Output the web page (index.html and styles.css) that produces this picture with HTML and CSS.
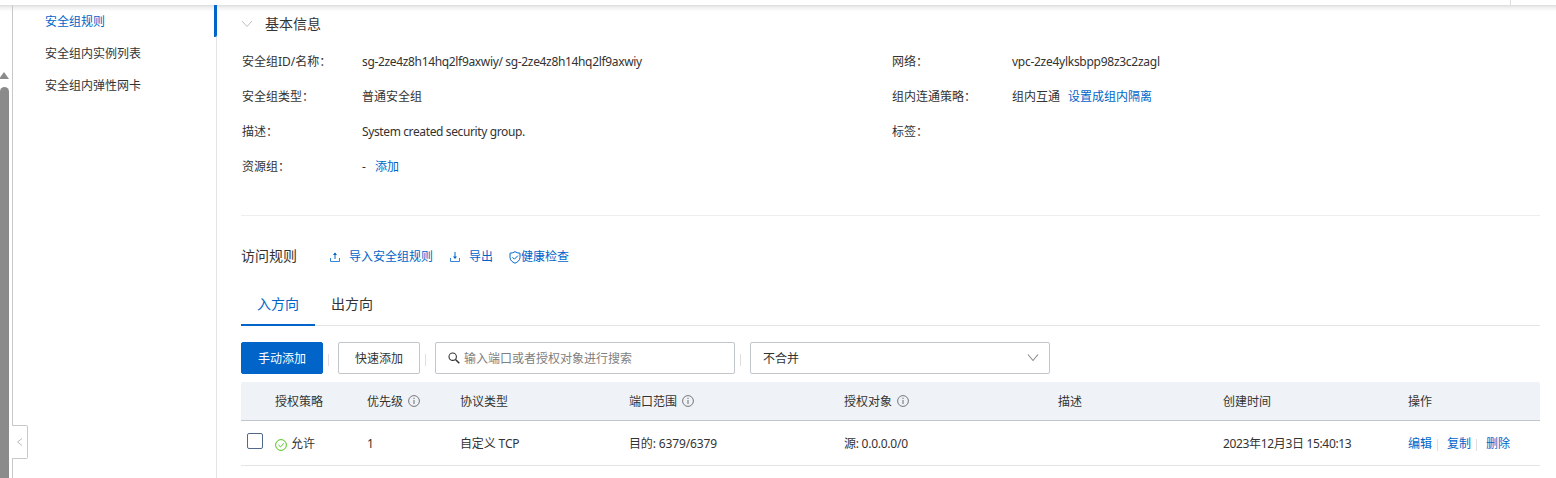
FILE: index.html
```html
<!DOCTYPE html>
<html lang="zh-CN">
<head>
<meta charset="utf-8">
<title>安全组规则</title>
<link rel="stylesheet" href="styles.css">
</head>
<body>
<svg class="defs" width="0" height="0">
  <symbol id="info" viewBox="0 0 12 12"><circle cx="6" cy="6" r="5.4" fill="none" stroke="#777" stroke-width="1"/><path d="M6 5v4M6 2.8v1.2" stroke="#777" stroke-width="1.1"/></symbol>
</svg>
<header class="topbar"><span class="topbar-split"></span></header>
<div class="shell">
  <div class="rail"><span class="rail-arrow"></span><span class="rail-thumb"></span></div>
  <nav class="side">
    <a class="side-item active">安全组规则</a>
    <a class="side-item">安全组内实例列表</a>
    <a class="side-item">安全组内弹性网卡</a>
    <span class="collapse"><svg width="7" height="10" viewBox="0 0 7 10"><path d="M6 1.5L1.5 5L6 8.5" fill="none" stroke="#bbb"/></svg></span>
  </nav>
  <main class="main">
    <h2 class="section-title"><svg width="12" height="8" viewBox="0 0 12 8"><path d="M1 1l5 5.5L11 1" fill="none" stroke="#c0c0c0"/></svg>基本信息</h2>
    <div class="info">
      <dl class="info-col">
        <dt>安全组ID/名称：</dt><dd><span class="ids">sg-2ze4z8h14hq2lf9axwiy/ sg-2ze4z8h14hq2lf9axwiy</span></dd>
        <dt>安全组类型：</dt><dd>普通安全组</dd>
        <dt>描述：</dt><dd><span class="desc">System created security group.</span></dd>
        <dt>资源组：</dt><dd>-<a class="link add">添加</a></dd>
      </dl>
      <dl class="info-col">
        <dt>网络：</dt><dd><span class="vpc">vpc-2ze4ylksbpp98z3c2zagl</span></dd>
        <dt>组内连通策略：</dt><dd>组内互通<a class="link">设置成组内隔离</a></dd>
        <dt>标签：</dt><dd></dd>
      </dl>
    </div>
    <div class="rules-head">
      <h2>访问规则</h2>
      <a class="import"><svg width="12" height="12" viewBox="0 0 12 12" fill="none" stroke="#3485dc"><path d="M1.5 7v3.5h9V7"/><path d="M6 8V2" stroke="#0064c8"/><path d="M4 4L6 1.5L8 4z" fill="#0064c8" stroke="none"/></svg>导入安全组规则</a>
      <a class="export"><svg width="12" height="12" viewBox="0 0 12 12" fill="none" stroke="#3485dc"><path d="M1.5 7v3.5h9V7"/><path d="M6 1v6" stroke="#0064c8"/><path d="M4 5.5L6 8L8 5.5z" fill="#0064c8" stroke="none"/></svg>导出</a>
      <a class="check"><svg width="12" height="13" viewBox="0 0 12 13" fill="none" stroke="#0064c8"><path d="M6 .7C4.6 1.7 2.7 2.2 1 2.2V6.500C1 9.300 3.500 11.200 6 12.200C8.500 11.200 11 9.300 11 6.500V2.200C9.300 2.200 7.400 1.700 6 .7Z"/><path d="M3.400 6.200l2 2 3.400-3.500"/></svg>健康检查</a>
    </div>
    <div class="tabs"><a class="tab on">入方向</a><a class="tab">出方向</a></div>
    <div class="tools">
      <button class="btn primary">手动添加</button><i class="sep"></i>
      <button class="btn">快速添加</button><i class="sep"></i>
      <label class="field search"><svg width="12" height="12" viewBox="0 0 12 12" fill="none" stroke="#333"><circle cx="4.700" cy="4.700" r="3.700" stroke-width="1.100"/><path d="M7.500 7.500L11.300 11.300" stroke-width="1.500"/></svg>输入端口或者授权对象进行搜索</label><i class="sep"></i>
      <div class="field select">不合并<svg width="12" height="8" viewBox="0 0 12 8"><path d="M1 .5l5 6L11 .5" fill="none" stroke="#888" stroke-width="1.100"/></svg></div>
    </div>
    <div class="table">
      <div class="row head">
        <span></span><span>授权策略</span><span>优先级<svg class="i"><use href="#info"/></svg></span><span>协议类型</span><span>端口范围<svg class="i"><use href="#info"/></svg></span><span>授权对象<svg class="i"><use href="#info"/></svg></span><span>描述</span><span>创建时间</span><span>操作</span>
      </div>
      <div class="row body">
        <span><i class="box"></i></span>
        <span><svg class="ok" width="12" height="12" viewBox="0 0 12 12" fill="none" stroke="#52c41a"><circle cx="6" cy="6" r="5.400"/><path d="M3.400 5.800l2.100 2.100 3.300-3.600"/></svg>允许</span>
        <span>1</span><span class="cell">自定义 TCP</span><span class="cell">目的: 6379/6379</span><span class="cell addr">源: 0.0.0.0/0</span><span></span><span class="date">2023年12月3日 15:40:13</span>
        <span class="ops"><a>编辑</a><i></i><a>复制</a><i></i><a>删除</a></span>
      </div>
    </div>
  </main>
</div>
</body>
</html>
```
FILE: styles.css
```css
* { box-sizing: border-box; }
body { margin: 0; height: 478px; overflow: hidden; background: #fff; color: #333; font: 12px/18px "Noto Sans", "Noto Sans CJK SC", sans-serif; }
h2, dl, dd { margin: 0; font-weight: 400; }
svg { flex: none; display: block; }
.defs { position: absolute; }
a { color: #0064c8; }
.topbar { height: 5px; display: flex; justify-content: flex-end; padding-right: 45px; }
.topbar-split { width: 1px; background: #ddd; }
.shell { display: flex; height: 473px; background: linear-gradient(#dcdcdc, #ededed 2px, #fafafa 5px, #fff 7px); }
.rail { width: 12px; display: flex; flex-direction: column; padding-top: 67px; }
.rail-arrow { width: 0; border: 5px solid transparent; border-top: 0; border-bottom: 7px solid #8b8b8b; margin-left: -1px; }
.rail-thumb { flex: 1; width: 9px; margin-top: 8px; margin-bottom: -5px; background: #8b8b8b; border-radius: 5px 5px 0 0; }
.side { position: relative; width: 205px; flex: none; border-left: 1px solid #c8c8c8; border-right: 1px solid #e3e4e6; }
.rail { flex: none; }
.side-item { display: block; height: 32px; line-height: 34px; padding-left: 32px; color: #333; }
.side-item.active { color: #0064c8; border-right: 3px solid #0064c8; margin-right: -1px; border-radius: 0 0 2px 0; }
.collapse { position: absolute; left: -1px; top: 420px; width: 16px; height: 34px; background: #fff; border: 1px solid #c8c8c8; border-left: 0; border-radius: 0 2px 2px 0; display: flex; align-items: center; justify-content: center; }
.main { flex: 1; min-width: 0; padding: 9px 16px 0 24px; }
.section-title { display: flex; align-items: center; gap: 12px; height: 20px; font-size: 14px; line-height: 20px; }
.info { display: flex; height: 182px; padding-top: 10px; border-bottom: 1px solid #eee; }
.info-col { width: 650px; flex: none; display: grid; grid-template-columns: 120px 1fr; grid-auto-rows: 35px; align-content: start; line-height: 36px; padding-left: 1px; }
.info-col .link { margin-left: 8px; }
.info-col .add { margin-left: 9px; }
.ids { letter-spacing: -0.34px; }
.desc { letter-spacing: -0.38px; }
.vpc { letter-spacing: -0.27px; }
.rules-head { display: flex; align-items: center; height: 20px; margin-top: 31px; line-height: 20px; }
.rules-head h2 { font-size: 14px; margin-top: -2px; }
.rules-head a { display: flex; align-items: center; gap: 8px; }
.rules-head .import { margin-left: 32px; }
.rules-head .export { margin-left: 16px; }
.rules-head .check { margin-left: 16px; gap: 0; }
.tabs { display: flex; height: 44px; margin-top: 15px; border-bottom: 1px solid #e3e4e6; font-size: 14px; line-height: 44px; }
.tab { height: 44px; padding: 0 16px; color: #333; }
.tab.on { color: #0064c8; border-bottom: 2px solid #0064c8; }
.tools { display: flex; align-items: center; height: 32px; margin-top: 16px; }
.btn { width: 82px; height: 32px; border: 1px solid #c0c6cc; border-radius: 2px; background: #fff; color: #333; font: inherit; padding: 2px 0 0; }
.btn.primary { background: #0064c8; border-color: #0064c8; color: #fff; }
.sep { width: 1px; height: 12px; margin: 4px 9px 0 5px; background: #dedede; }
.field { width: 300px; height: 32px; border: 1px solid #c0c6cc; border-radius: 2px; display: flex; align-items: center; padding: 2px 10px 0 12px; }
.search { gap: 4px; color: #808080; }
.search svg { margin-top: -3px; }
.select { justify-content: space-between; }
.select svg { margin-top: -2px; }
.table { margin-top: 8px; }
.row { display: grid; grid-template-columns: 34px 92px 93px 169px 215px 214px 165px 185px 1fr; align-items: center; }
.row > span { display: flex; align-items: center; padding-top: 1px; }
.head { height: 39px; background: #eff3f8; border-bottom: 1px solid #c0c6cc; border-radius: 2px 2px 0 0; }
.body { height: 45px; border-bottom: 1px solid #e3e4e6; }
.i { width: 12px; height: 12px; margin-left: 5px; margin-top: -2px; }
.box { width: 16px; height: 16px; border: 1px solid #50688c; border-radius: 2px; margin: -6px 0 0 6px; }
.ok { margin: 2px 4px 0 0; }
.cell { letter-spacing: -0.13px; white-space: pre; }
.addr { letter-spacing: -0.25px; }
.date { letter-spacing: -0.34px; }
.ops i { width: 1px; height: 12px; background: #dedede; margin: 2px 9px 0 5px; }
```
